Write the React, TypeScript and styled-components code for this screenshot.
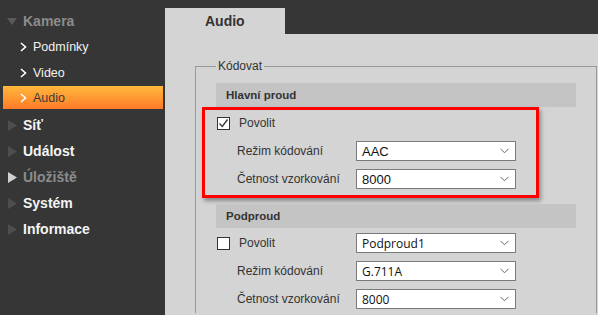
import React from "react";
import styled, { createGlobalStyle, css } from "styled-components";

const GlobalStyle = createGlobalStyle`
  html, body, #root {
    margin: 0;
    height: 100%;
  }
  body {
    background: #363636;
    font-family: "Liberation Sans", Arial, sans-serif;
    overflow: hidden;
  }
`;

const menu = [
  { label: "Kamera", open: true, muted: true },
  { label: "Podmínky", sub: true },
  { label: "Video", sub: true },
  { label: "Audio", sub: true, active: true },
  { label: "Síť" },
  { label: "Událost" },
  { label: "Úložiště", muted: true, light: true },
  { label: "Systém" },
  { label: "Informace" },
];

const App = () => {
  return (
    <>
      <GlobalStyle />
      <Page>
        <Sidebar>
          {menu.map((item) =>
            item.sub ? (
              <SubItem key={item.label} $active={item.active}>
                <Chevron width="7" height="10" viewBox="0 0 7 10">
                  <polyline points="1,1 5.5,5 1,9" fill="none" stroke="#fff" strokeWidth="1.6" />
                </Chevron>
                {item.label}
              </SubItem>
            ) : (
              <TopItem key={item.label} $muted={item.muted}>
                <Arrow width="11" height="11" viewBox="0 0 11 11">
                  {item.open ? (
                    <polygon points="0,2 10,2 5,9" fill="#5a5a5a" />
                  ) : (
                    <polygon points="1,0 10,5.5 1,11" fill={item.light ? "#d0d0d0" : "#4e4e4e"} />
                  )}
                </Arrow>
                {item.label}
              </TopItem>
            )
          )}
        </Sidebar>
        <Main>
          <Tab>Audio</Tab>
          <Panel>
            <Fieldset>
              <Legend>Kódovat</Legend>
              <Section>
                <SectionHead $space={2}>Hlavní proud</SectionHead>
                <Row>
                  <CheckLabel>
                    <Check $checked>
                      <svg width="11" height="11" viewBox="0 0 11 11">
                        <polyline points="1.5,5.5 4.3,8.5 9.5,1.5" fill="none" stroke="#333" strokeWidth="1.3" />
                      </svg>
                    </Check>
                    Povolit
                  </CheckLabel>
                </Row>
                <Row>
                  <FieldLabel>Režim kódování</FieldLabel>
                  <Select value="AAC" />
                </Row>
                <Row>
                  <FieldLabel>Četnost vzorkování</FieldLabel>
                  <Select value="8000" />
                </Row>
                <Highlight />
              </Section>
              <Section $gap>
                <SectionHead>Podproud</SectionHead>
                <Row>
                  <CheckLabel>
                    <Check />
                    Povolit
                  </CheckLabel>
                  <Select value="Podproud1" $alt />
                </Row>
                <Row>
                  <FieldLabel>Režim kódování</FieldLabel>
                  <Select value="G.711A" $alt />
                </Row>
                <Row>
                  <FieldLabel>Četnost vzorkování</FieldLabel>
                  <Select value="8000" $alt />
                </Row>
              </Section>
            </Fieldset>
          </Panel>
        </Main>
      </Page>
    </>
  );
};

const Select = ({ value, $alt }: { value: string; $alt?: boolean }) => (
  <SelectBox $alt={$alt}>
    <span>{value}</span>
    <svg width="9" height="6" viewBox="0 0 9 6">
      <polyline points="0.5,0.8 4.5,4.8 8.5,0.8" fill="none" stroke="#666" strokeWidth="1" />
    </svg>
  </SelectBox>
);

export default App;

const Page = styled.div`
  display: flex;
  height: 100%;
`;
const Sidebar = styled.div`
  width: 165px;
  flex-shrink: 0;
  padding-top: 8px;
`;
const TopItem = styled.div<{ $muted?: boolean }>`
  display: flex;
  align-items: center;
  height: 26px;
  padding-left: 7px;
  font-size: 14px;
  font-weight: bold;
  color: ${(p) => (p.$muted ? "#8c8c8c" : "#f4f4f4")};
`;
const Arrow = styled.svg`
  width: 11px;
  margin-right: 5px;
`;
const SubItem = styled.div<{ $active?: boolean }>`
  display: flex;
  align-items: center;
  height: 26px;
  margin-left: 3px;
  width: 160px;
  padding-left: 17px;
  box-sizing: border-box;
  font-size: 12.5px;
  color: #f2f2f2;
  ${(p) =>
    p.$active &&
    css`
      height: 23px;
      margin-bottom: 3px;
      color: #3a3a3a;
      background: linear-gradient(#ffb83c, #ff7a28);
    `}
`;
const Chevron = styled.svg`
  margin-right: 6px;
`;
const Main = styled.div`
  flex: 1;
  display: flex;
  flex-direction: column;
  padding-top: 8px;
`;
const Tab = styled.div`
  width: 120px;
  height: 26px;
  box-sizing: border-box;
  padding: 5px 0 0 40px;
  background: #d4d4d4;
  color: #333;
  font-size: 14px;
  font-weight: bold;
`;
const Panel = styled.div`
  flex: 1;
  background: #d4d4d4;
  padding: 25px 1px 0 30px;
`;
const Fieldset = styled.fieldset`
  margin: 0;
  padding: 10px 20px 0 20px;
  border: 1px solid #9a9a9a;
  border-bottom: none;
  min-width: 0;
`;
const Legend = styled.legend`
  padding: 0 2px;
  font-size: 12px;
  color: #333;
`;
const Section = styled.div<{ $gap?: boolean }>`
  position: relative;
  margin-top: ${(p) => (p.$gap ? "11px" : "0")};
`;
const SectionHead = styled.div<{ $space?: number }>`
  height: 24px;
  line-height: 24px;
  padding-left: 10px;
  background: #c4c4c4;
  color: #333;
  font-size: 11.5px;
  font-weight: bold;
  margin-bottom: ${(p) => p.$space ?? 1}px;
`;
const Row = styled.div`
  display: grid;
  grid-template-columns: 140px 160px;
  align-items: center;
  height: 28px;
`;
const CheckLabel = styled.div`
  display: flex;
  align-items: center;
  padding-left: 1px;
  font-size: 12px;
  color: #333;
`;
const Check = styled.span<{ $checked?: boolean }>`
  display: flex;
  align-items: center;
  justify-content: center;
  width: 13px;
  height: 13px;
  box-sizing: border-box;
  border: 1px solid #333;
  background: #fff;
  margin-right: 9px;
`;
const FieldLabel = styled.div`
  padding-left: 21px;
  font-size: 12px;
  color: #333;
  white-space: nowrap;
`;
const SelectBox = styled.div<{ $alt?: boolean }>`
  display: flex;
  align-items: center;
  justify-content: space-between;
  height: 20px;
  box-sizing: border-box;
  padding: 0 6px 0 5px;
  border: 1px solid #7a7a7a;
  background: #fff;
  color: #111;
  font-size: ${(p) => (p.$alt ? "12px" : "13px")};
  font-family: ${(p) => (p.$alt ? '"Open Sans", sans-serif' : '"Liberation Sans", Arial, sans-serif')};
`;
const Highlight = styled.div`
  position: absolute;
  left: -14px;
  top: 24px;
  width: 337px;
  height: 91px;
  box-sizing: border-box;
  border: 3px solid #f00;
  box-shadow: 2px 3px 4px rgba(0, 0, 0, 0.35);
  pointer-events: none;
`;
